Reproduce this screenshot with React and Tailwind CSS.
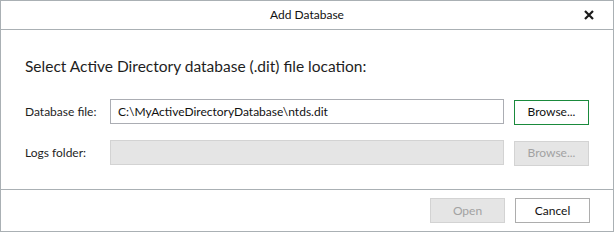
import React from 'react';

// Add Database dialog
const font = { fontFamily: 'Lato, "Liberation Sans", sans-serif' };

const CloseIcon = () => (
  <svg width="10" height="10" viewBox="0 0 10 10" className="block">
    <path d="M1 1 L9 9 M9 1 L1 9" stroke="#1a1a1a" strokeWidth="2.2" strokeLinecap="butt" />
  </svg>
);

const Button = ({ children, disabled, focused }) => (
  <button
    disabled={disabled}
    className={
      'w-[75px] h-[25px] text-[12px] leading-none border ' +
      (disabled
        ? 'bg-[#e5e5e5] border-[#d3d3d3] text-[#a2a2a2]'
        : focused
        ? 'bg-white border-[#1a8a3c] text-[#111]'
        : 'bg-white border-[#adadad] text-[#111]')
    }
  >
    {children}
  </button>
);

const Row = ({ label, value, disabled, focused }) => (
  <div className="flex items-center h-[25px]">
    <div className="w-[85px] text-[12px] text-[#1e1e1e]">{label}</div>
    <div
      className={
        'w-[394px] h-[25px] border flex items-center pl-[7px] text-[12px] text-[#111] ' +
        (disabled ? 'bg-[#e5e5e5] border-[#d3d3d3]' : 'bg-white border-[#abadb3]')
      }
    >
      {value}
    </div>
    <div className="ml-[10px]">
      <Button disabled={disabled} focused={focused}>Browse...</Button>
    </div>
  </div>
);

export default function App() {
  return (
    <div style={font} className="w-[614px] h-[232px] bg-white border border-[#aab0b4] flex flex-col">
      <div className="h-[29px] shrink-0 border-b border-[#aab0b4] flex items-center justify-center relative">
        <span className="text-[12px] text-[#111]">Add Database</span>
        <span className="absolute right-[19px] top-[9px]">
          <CloseIcon />
        </span>
      </div>

      <div className="h-[159px] shrink-0 pl-[24px] pt-[26px]">
        <div className="text-[15.5px] leading-[20px] text-[#1e1e1e]">
          Select Active Directory database (.dit) file location:
        </div>
        <div className="mt-[23px] flex flex-col gap-[16px]">
          <Row label="Database file:" value="C:\MyActiveDirectoryDatabase\ntds.dit" focused />
          <Row label="Logs folder:" value="" disabled />
        </div>
      </div>

      <div className="flex-1 border-t border-[#aab0b4] flex justify-end items-start gap-[10px] pt-[8px] pr-[23px]">
        <Button disabled>Open</Button>
        <Button>Cancel</Button>
      </div>
    </div>
  );
}
